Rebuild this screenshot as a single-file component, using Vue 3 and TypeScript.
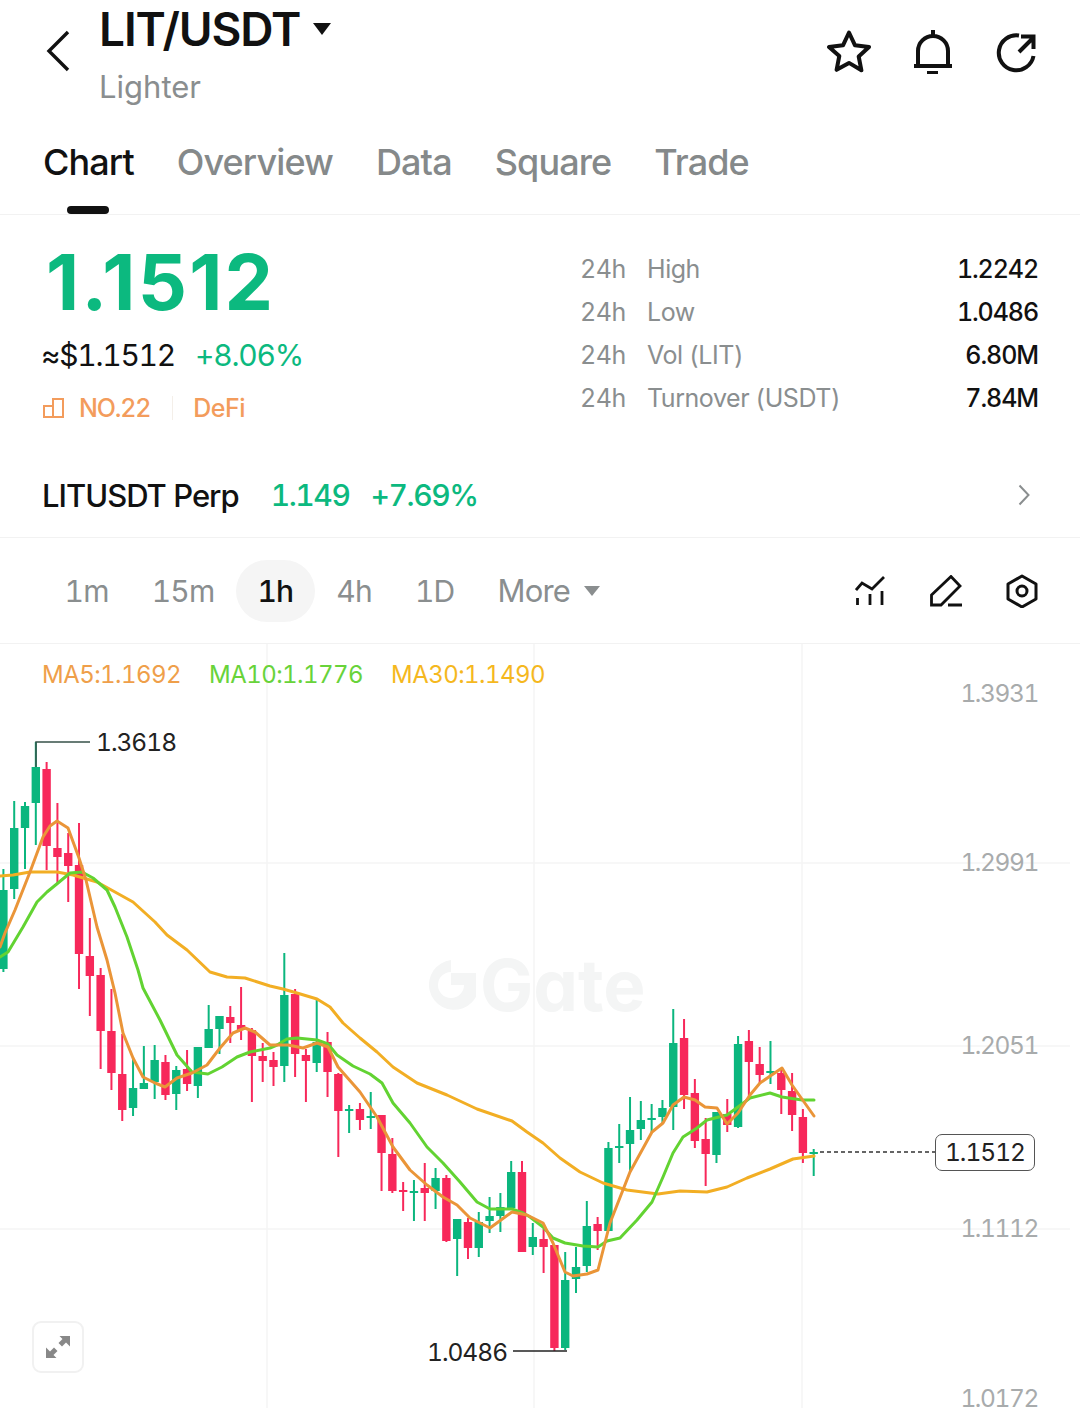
<template>
  <div class="page">
    <header class="top">
      <svg class="back" viewBox="0 0 24 42" width="24" height="42">
        <path d="M22 2 3 21l19 19" fill="none" stroke="#111" stroke-width="3.4" />
      </svg>
      <div class="pair">
        <div class="pair-name">LIT/USDT<span class="caret" /></div>
        <div class="pair-sub">Lighter</div>
      </div>
      <div class="top-icons">
        <svg viewBox="0 0 44 44" width="44" height="44">
          <path d="M22 2.500l6 12.800 14 1.700-10.300 9.500 2.700 13.800L22 32.900 9.600 39.800l2.700-13.800L2 17l14-1.700z" fill="none" stroke="#111" stroke-width="4" stroke-linejoin="round" />
        </svg>
        <svg viewBox="0 0 44 44" width="44" height="44">
          <path d="M22 0v6M7 35V21a15 15 0 0 1 30 0v14M3 36h38M16 43h11" fill="none" stroke="#111" stroke-width="4" />
        </svg>
        <svg viewBox="0 0 44 44" width="44" height="44">
          <path d="M24 5.500A17.500 17.500 0 1 0 38.500 26M24 22 37.500 8.500M26 6.500h12.500v12.500" fill="none" stroke="#111" stroke-width="4" />
        </svg>
      </div>
    </header>

    <nav class="tabs">
      <div v-for="t in tabs" :key="t" class="tab" :class="{ on: t === 'Chart' }">{{ t }}</div>
    </nav>

    <section class="quote">
      <div class="quote-left">
        <div class="price">1.1512</div>
        <div class="sub-row">
          <span class="usd">≈$1.1512</span>
          <span class="chg">+8.06%</span>
        </div>
        <div class="tag-row">
          <svg viewBox="0 0 22 20" width="22" height="20">
            <path d="M1 8h9v11H1zM10 1h10v18H10z" fill="none" stroke="#f39c5c" stroke-width="2" />
          </svg>
          <span class="rank">NO.22</span>
          <span class="tag-div" />
          <span class="rank defi">DeFi</span>
        </div>
      </div>
      <div class="stats">
        <div v-for="s in stats" :key="s.label" class="stat">
          <span class="stat-h">24h</span>
          <span class="stat-label">{{ s.label }}</span>
          <span class="stat-val">{{ s.value }}</span>
        </div>
      </div>
    </section>

    <section class="perp">
      <span class="perp-name">LITUSDT Perp</span>
      <span class="perp-num">1.149</span>
      <span class="perp-num">+7.69%</span>
      <svg class="perp-arrow" viewBox="0 0 12 22" width="12" height="22">
        <path d="M1.500 1.500 10.500 11l-9 9.500" fill="none" stroke="#8a8e8f" stroke-width="2" />
      </svg>
    </section>

    <section class="intervals">
      <span v-for="iv in intervals" :key="iv" class="iv" :class="{ on: iv === '1h' }">{{ iv }}</span>
      <span class="iv more">More<i class="more-caret" /></span>
      <div class="tools">
        <svg viewBox="855 574 32 32" width="32" height="32">
          <path d="M856 589l6-7 10 6 12-12M857.500 597v7M870 593v11M882 590v14" fill="none" stroke="#111" stroke-width="2.800" />
        </svg>
        <svg viewBox="930 573 33 32" width="33" height="32">
          <path d="M931.500 593 951 574.500l9 9.500-19 19h-9.500zM948 603h14" fill="none" stroke="#111" stroke-width="2.800" />
        </svg>
        <svg viewBox="1006 573 32 34" width="32" height="34">
          <path d="M1022 575l14 8v15l-14 8-14-8v-15z" fill="none" stroke="#111" stroke-width="3" stroke-linejoin="round" />
          <circle cx="1022" cy="590" r="5" fill="none" stroke="#111" stroke-width="3" />
        </svg>
      </div>
    </section>

    <section class="chart">
      <div class="legend">
        <span class="ma5">MA5:1.1692</span>
        <span class="ma10">MA10:1.1776</span>
        <span class="ma30">MA30:1.1490</span>
      </div>

      <div class="mark">
        <svg viewBox="0 0 50 50" width="50" height="50">
          <path d="M25 0v12a13 13 0 1 0 13 13H25V13h25a25 25 0 1 1-25-13z" fill="#f4f5f5" />
        </svg>
        <span>Gate</span>
      </div>

      <!-- grid and candles use page y, viewBox starts at the chart top -->
      <svg class="plot" viewBox="0 644 1080 764" width="1080" height="764">
        <g stroke="#f4f4f4" stroke-width="1.500">
          <line v-for="y in gridY" :key="y" x1="0" x2="1070" :y1="y" :y2="y" />
          <line v-for="x in gridX" :key="x" y1="644" y2="1408" :x1="x" :x2="x" />
        </g>
        <g v-for="c in bars" :key="c.x">
          <line :x1="c.x" :x2="c.x" :y1="c.high" :y2="c.low" :stroke="c.color" stroke-width="2" />
          <rect :x="c.x - 4.2" :y="c.top" width="8.400" :height="c.h" :fill="c.color" />
        </g>
        <polyline :points="ma30" class="ma-line" stroke="#f2ae24" />
        <polyline :points="ma10" class="ma-line" stroke="#62d332" />
        <polyline :points="ma5" class="ma-line" stroke="#ea9538" />

        <path d="M36 767V742H90" fill="none" stroke="#37514a" stroke-width="1.500" />
        <path d="M513 1351H567" fill="none" stroke="#222" stroke-width="1.500" />
        <line x1="820" x2="935" y1="1152" y2="1152" stroke="#333" stroke-width="1.300" stroke-dasharray="4 3" />
      </svg>

      <span class="hl" style="left: 96px; top: 82px">1.3618</span>
      <span class="hl" style="left: 427px; top: 692px">1.0486</span>

      <span v-for="a in axis" :key="a.text" class="axis" :style="{ top: a.top + 'px' }">{{ a.text }}</span>
      <span class="last-tag">1.1512</span>

      <div class="expand">
        <svg viewBox="0 0 26 26" width="26" height="26">
          <path d="M14.500 2H25V12.500L21 8.500 17 12.500 13.500 9 17.500 5zM11.500 24H1V13.500L5 17.500 9 13.500 12.500 17 8.500 21z" fill="#888" />
        </svg>
      </div>
    </section>
  </div>
</template>

<script setup lang="ts">
import { computed } from 'vue'

const tabs = ['Chart', 'Overview', 'Data', 'Square', 'Trade']
const intervals = ['1m', '15m', '1h', '4h', '1D']

const stats = [
  { label: 'High', value: '1.2242' },
  { label: 'Low', value: '1.0486' },
  { label: 'Vol (LIT)', value: '6.80M' },
  { label: 'Turnover (USDT)', value: '7.84M' },
]

const axis = [
  { text: '1.3931', top: 39 },
  { text: '1.2991', top: 208 },
  { text: '1.2051', top: 391 },
  { text: '1.1112', top: 574 },
  { text: '1.0172', top: 744 },
]

const gridY = [863, 1046, 1229]
const gridX = [267, 534, 802]

// high, body top, body bottom, low, up
type Candle = [number, number, number, number, number]
const candles: Candle[] = [
  [869, 890, 969, 972, 1], [801, 828, 889, 899, 1], [802, 806, 828, 869, 1], [742, 767, 803, 845, 1],
  [762, 769, 846, 870, 0], [803, 848, 857, 883, 0], [833, 853, 866, 902, 0], [823, 865, 954, 989, 0],
  [918, 956, 976, 1016, 0], [968, 975, 1031, 1069, 0], [989, 1031, 1073, 1090, 0], [1034, 1074, 1110, 1121, 0],
  [1058, 1088, 1108, 1116, 1], [1046, 1083, 1089, 1089, 1], [1045, 1060, 1082, 1099, 1], [1055, 1062, 1095, 1100, 0],
  [1066, 1070, 1094, 1110, 1], [1050, 1069, 1084, 1091, 0], [1047, 1047, 1086, 1098, 1], [1005, 1029, 1048, 1048, 1],
  [1016, 1016, 1029, 1054, 1], [1006, 1017, 1023, 1043, 0], [987, 1025, 1030, 1040, 0], [1028, 1030, 1056, 1102, 0],
  [1043, 1056, 1061, 1082, 0], [1052, 1060, 1067, 1086, 0], [953, 995, 1066, 1082, 1], [989, 994, 1054, 1077, 0],
  [1049, 1055, 1061, 1102, 0], [1000, 1042, 1063, 1072, 1], [1032, 1042, 1072, 1097, 0], [1073, 1074, 1111, 1157, 0],
  [1105, 1109, 1111, 1133, 1], [1103, 1109, 1120, 1130, 0], [1092, 1116, 1118, 1129, 1], [1115, 1115, 1153, 1191, 0],
  [1138, 1154, 1191, 1193, 0], [1182, 1190, 1192, 1211, 0], [1180, 1191, 1193, 1221, 1], [1163, 1188, 1193, 1221, 0],
  [1168, 1178, 1191, 1209, 1], [1175, 1178, 1241, 1242, 0], [1219, 1219, 1239, 1276, 1], [1218, 1222, 1248, 1259, 0],
  [1212, 1222, 1248, 1257, 1], [1197, 1216, 1221, 1233, 1], [1193, 1207, 1216, 1232, 1], [1161, 1172, 1208, 1208, 1],
  [1161, 1172, 1252, 1252, 0], [1223, 1237, 1247, 1255, 1], [1229, 1239, 1247, 1273, 0], [1245, 1245, 1348, 1351, 0],
  [1252, 1280, 1348, 1350, 1], [1247, 1267, 1279, 1293, 1], [1201, 1226, 1266, 1272, 1], [1217, 1224, 1231, 1250, 0],
  [1142, 1148, 1231, 1231, 1], [1124, 1146, 1148, 1163, 1], [1097, 1130, 1144, 1173, 1], [1101, 1120, 1129, 1140, 1],
  [1104, 1118, 1120, 1132, 1], [1100, 1108, 1117, 1123, 1], [1009, 1043, 1107, 1130, 1], [1019, 1038, 1095, 1109, 0],
  [1079, 1093, 1141, 1148, 0], [1118, 1139, 1154, 1186, 0], [1112, 1112, 1155, 1163, 1], [1099, 1114, 1125, 1132, 0],
  [1036, 1044, 1127, 1128, 1], [1030, 1041, 1062, 1096, 0], [1047, 1064, 1075, 1083, 0], [1041, 1071, 1073, 1084, 1],
  [1068, 1073, 1090, 1114, 0], [1073, 1091, 1115, 1131, 0], [1109, 1117, 1153, 1163, 0], [1149, 1152, 1154, 1176, 1],
]

const bars = computed(() =>
  candles.map((c, i) => ({
    x: 3.4 + 10.804 * i,
    high: c[0],
    top: c[1],
    h: c[2] - c[1],
    low: c[3],
    color: c[4] ? '#0bb67e' : '#f7285a',
  })),
)

const ma5 =
  '0,947 5,933 15,910 30,872 43,837 50,826 57,821 68,828 79,858 86,880 97,927 107,960 115,993 123,1033 133,1058 143,1077 155,1083 165,1087 177,1078 192,1073 207,1065 220,1048 233,1033 245,1028 255,1032 270,1045 288,1045 303,1048 317,1043 328,1047 338,1067 360,1092 377,1117 393,1147 410,1170 427,1185 443,1197 457,1205 470,1218 490,1228 512,1212 527,1215 543,1223 553,1243 565,1272 573,1276 587,1274 598,1270 610,1223 630,1172 652,1132 663,1123 673,1105 684,1097 695,1100 705,1107 717,1108 727,1124 738,1113 750,1095 760,1083 782,1068 792,1085 814,1116'

const ma10 =
  '0,957 8,952 23,927 37,902 47,892 58,883 70,873 82,872 93,878 107,890 115,907 127,937 138,970 143,988 160,1020 177,1055 192,1072 208,1074 222,1067 237,1057 250,1052 270,1048 277,1045 287,1039 297,1038 317,1040 328,1044 337,1055 353,1066 370,1074 382,1083 393,1103 410,1123 427,1147 443,1163 460,1182 477,1202 490,1209 512,1209 523,1213 530,1217 543,1227 553,1238 565,1243 583,1246 598,1247 607,1241 620,1238 637,1220 652,1202 663,1177 673,1153 683,1137 697,1128 707,1120 727,1115 738,1107 750,1098 770,1093 782,1097 802,1100 814,1100'

const ma30 =
  '0,876 13,875 30,872 43,872 57,872 73,875 97,882 115,892 133,902 155,922 167,935 187,950 210,972 227,977 245,978 270,986 283,989 297,993 317,999 330,1007 343,1023 360,1038 377,1052 393,1067 417,1083 447,1095 477,1109 512,1121 527,1132 543,1143 560,1158 580,1172 603,1183 627,1190 658,1194 680,1191 707,1192 727,1187 747,1178 770,1169 793,1159 814,1156'
</script>

<style>
body {
  background: #fff;
}
</style>

<style scoped>
.page {
  width: 1080px;
  height: 1408px;
  overflow: hidden;
  background: #fff;
  color: #111;
  font-family: Inter, 'Liberation Sans', sans-serif;
  font-variant-numeric: tabular-nums;
}

.top {
  display: flex;
  height: 130px;
  padding: 0 41px 0 46px;
}
.back {
  margin-top: 30px;
}
.pair {
  margin-left: 30px;
  padding-top: 1px;
}
.pair-name {
  display: flex;
  align-items: flex-start;
  margin-left: -1px;
  font-size: 46px;
  line-height: 56px;
  font-weight: 600;
  letter-spacing: -1.1px;
}
.caret {
  margin: 22px 0 0 13px;
  border-left: 9px solid transparent;
  border-right: 9px solid transparent;
  border-top: 12px solid #111;
}
.pair-sub {
  margin-top: 2px;
  margin-left: -1px;
  font-size: 31px;
  line-height: 56px;
  color: #8a8e8f;
}
.top-icons {
  display: flex;
  gap: 40px;
  margin-left: auto;
  margin-top: 30px;
  height: 44px;
}

.tabs {
  display: flex;
  gap: 43px;
  height: 85px;
  padding: 0 43px;
  border-bottom: 1px solid #f2f2f2;
  box-sizing: border-box;
}
.tab {
  position: relative;
  font-size: 36px;
  line-height: 64px;
  font-weight: 500;
  letter-spacing: -0.9px;
  color: #85898a;
}
.tab.on {
  color: #111;
}
.tab.on::after {
  content: '';
  position: absolute;
  left: 24px;
  top: 76px;
  width: 42px;
  height: 8px;
  border-radius: 4px;
  background: #111;
}

.quote {
  display: flex;
  height: 235px;
  padding: 0 42px 0 43px;
}
.quote-left {
  width: 537px;
}
.price {
  margin-left: 3px;
  margin-top: 25px;
  font-size: 77px;
  line-height: 84px;
  font-weight: 700;
  font-variant-numeric: normal;
  letter-spacing: 2.2px;
  color: #0cb97f;
}
.sub-row {
  display: flex;
  gap: 20px;
  margin-top: 10px;
  margin-left: -2px;
  font-size: 30px;
  line-height: 42px;
  letter-spacing: -1.25px;
}
.chg {
  color: #0cb97f;
}
.tag-row {
  display: flex;
  align-items: center;
  margin-top: 15px;
  height: 34px;
}
.rank {
  margin-left: 14px;
  font-size: 25px;
  font-weight: 500;
  letter-spacing: -1.2px;
  color: #f39c5c;
}
.rank.defi {
  margin-left: 13px;
  letter-spacing: -0.5px;
}
.tag-div {
  width: 1px;
  height: 24px;
  margin-left: 22px;
  margin-right: 7px;
  background: #f4efe9;
}
.stats {
  flex: 1;
  padding-top: 32px;
}
.stat {
  display: flex;
  height: 43px;
  align-items: center;
  font-size: 25px;
  letter-spacing: -0.45px;
  color: #8a8e8f;
}
.stat-h {
  width: 67px;
}
.stat-val {
  margin-left: auto;
  color: #111;
  font-weight: 500;
  letter-spacing: -1.1px;
}

.perp {
  display: flex;
  align-items: center;
  gap: 21px;
  height: 88px;
  padding: 3px 50px 0 42px;
  box-sizing: border-box;
  border-bottom: 1px solid #f2f2f2;
  font-size: 31px;
}
.perp-name {
  margin-right: 11px;
  font-weight: 500;
  letter-spacing: -1px;
}
.perp-num {
  color: #0cb97f;
  font-size: 30px;
  font-weight: 500;
  letter-spacing: -1.4px;
}
.perp-arrow {
  margin-left: auto;
}

.intervals {
  display: flex;
  align-items: center;
  height: 106px;
  padding: 0 42px 0 43px;
  box-sizing: border-box;
  border-bottom: 1px solid #f2f2f2;
  font-size: 30px;
  letter-spacing: -0.8px;
  color: #8a8e8f;
}
.iv {
  padding: 0 21.5px;
  line-height: 62px;
  border-radius: 31px;
}
.iv.on {
  color: #111;
  font-weight: 500;
  background: #f5f5f5;
}
.iv.more {
  display: flex;
  align-items: center;
  font-size: 31px;
}
.more-caret {
  margin-left: 14px;
  border-left: 8px solid transparent;
  border-right: 8px solid transparent;
  border-top: 10px solid #8a8e8f;
}
.tools {
  display: flex;
  align-items: center;
  gap: 43px;
  margin-left: auto;
}

.chart {
  position: relative;
  height: 764px;
}
.plot {
  position: absolute;
  left: 0;
  top: 0;
}
.legend {
  position: absolute;
  z-index: 2;
  left: 42px;
  top: 15px;
  display: flex;
  gap: 28px;
  font-size: 24px;
  line-height: 32px;
  letter-spacing: -0.55px;
}
.ma5 {
  color: #ef9f4a;
}
.ma10 {
  color: #68d33a;
}
.ma30 {
  color: #f5b81e;
}
.mark {
  position: absolute;
  left: 426px;
  top: 316px;
  display: flex;
  align-items: center;
  gap: 4px;
  font-size: 71px;
  line-height: 50px;
  font-weight: 700;
  font-feature-settings: 'cv11';
  color: #f4f5f5;
}
.hl {
  position: absolute;
  font-size: 24.5px;
  line-height: 32px;
  letter-spacing: -1px;
  color: #222;
}
.axis {
  position: absolute;
  right: 42px;
  font-size: 24.5px;
  line-height: 20px;
  letter-spacing: -1.4px;
  color: #a8abac;
}
.last-tag {
  position: absolute;
  left: 935px;
  top: 490px;
  width: 100px;
  height: 37px;
  box-sizing: border-box;
  border: 1.5px solid #555;
  border-radius: 7px;
  background: #fff;
  text-align: center;
  font-size: 24.5px;
  letter-spacing: -1px;
  line-height: 34px;
  color: #222;
}
.expand {
  position: absolute;
  left: 32px;
  top: 677px;
  width: 52px;
  height: 52px;
  box-sizing: border-box;
  display: flex;
  align-items: center;
  justify-content: center;
  background: #fff;
  border: 2px solid #f1f1f1;
  border-radius: 9px;
}
.ma-line {
  fill: none;
  stroke-width: 3;
  stroke-linejoin: round;
  stroke-linecap: round;
}
</style>
